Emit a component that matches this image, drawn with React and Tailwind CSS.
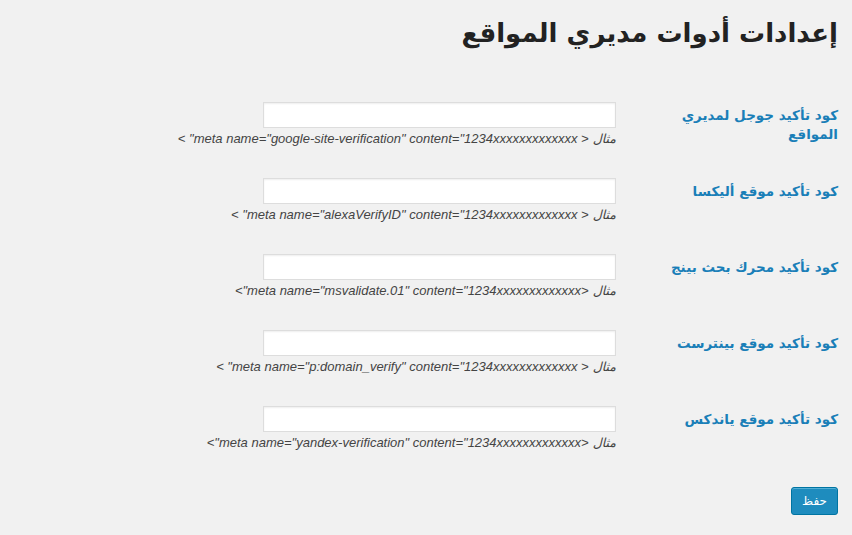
import React from "react";

const rows = [
  { label: "كود تأكيد جوجل لمديري المواقع", hint: '< "meta name="google-site-verification" content="1234xxxxxxxxxxxxx > ' },
  { label: "كود تأكيد موقع أليكسا", hint: '< "meta name="alexaVerifyID" content="1234xxxxxxxxxxxxx > ' },
  { label: "كود تأكيد محرك بحث بينج", hint: '<"meta name="msvalidate.01" content="1234xxxxxxxxxxxxx> ' },
  { label: "كود تأكيد موقع بينترست", hint: '< "meta name="p:domain_verify" content="1234xxxxxxxxxxxxx > ' },
  { label: "كود تأكيد موقع ياندكس", hint: '<"meta name="yandex-verification" content="1234xxxxxxxxxxxxx> ' },
];

export default function App() {
  return (
    <div
      dir="rtl"
      className="w-[852px] h-[535px] bg-[#f1f1f1] overflow-hidden pr-[14px] pt-[13px]"
      style={{ fontFamily: '"DejaVu Sans", Tahoma, sans-serif' }}
    >
      <h1 className="text-[26px] leading-[40px] font-bold text-[#222]">إعدادات أدوات مديري المواقع</h1>
      <div className="mt-[49px] flex flex-col gap-[31px]">
        {rows.map((r, i) => (
          <div key={i} className="flex items-start">
            <div className="w-[180px] shrink-0 pt-[4px] text-[13.5px] leading-[19px] font-semibold text-[#1a7fb8]">
              {r.label}
            </div>
            <div className="mr-[42px] flex flex-col items-start">
              <div className="w-[353px] h-[26px] bg-white border border-[#dddddd] shadow-[inset_0_1px_2px_rgba(0,0,0,0.07)]" />
              <p className="mt-[3px] text-[12.5px] leading-[16px] italic text-[#444]">
                <span>مثال </span>
                <span dir="ltr" style={{ fontFamily: '"Liberation Sans", Arial, sans-serif', fontSize: "13px" }}>
                  {r.hint}
                </span>
              </p>
            </div>
          </div>
        ))}
      </div>
      <div className="mt-[36px] flex">
        <button className="w-[47px] h-[28px] rounded-[3px] bg-[#1e8cbe] border border-[#0074a2] shadow-[inset_0_1px_0_rgba(120,200,230,0.6)] text-white text-[12px] leading-[26px]">
          حفظ
        </button>
      </div>
    </div>
  );
}
